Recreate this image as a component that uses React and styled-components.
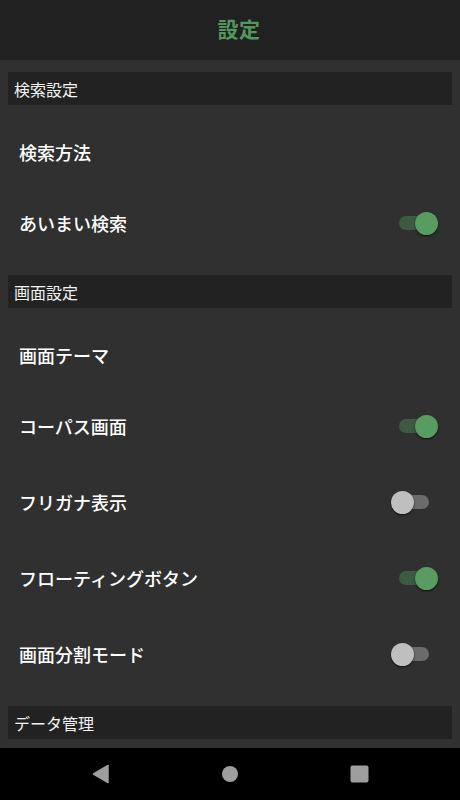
import styled, { createGlobalStyle } from 'styled-components';

const GlobalStyle = createGlobalStyle`
  html, body {
    margin: 0;
    padding: 0;
    background: #303030;
    font-family: 'Noto Sans CJK JP', 'Noto Sans', sans-serif;
  }
`;

const sections = [
  {
    title: '検索設定',
    items: [
      { label: '検索方法' },
      { label: 'あいまい検索', toggle: true, on: true },
    ],
  },
  {
    title: '画面設定',
    items: [
      { label: '画面テーマ' },
      { label: 'コーパス画面', toggle: true, on: true },
      { label: 'フリガナ表示', toggle: true, on: false },
      { label: 'フローティングボタン', toggle: true, on: true },
      { label: '画面分割モード', toggle: true, on: false },
    ],
  },
  {
    title: 'データ管理',
    items: [],
  },
];

const Switch = ({ on }) => (
  <Track $on={on}>
    <Thumb $on={on} />
  </Track>
);

const App = () => {
  return (
    <>
      <GlobalStyle />
      <Screen>
        <AppBar>
          <h1>設定</h1>
        </AppBar>
        <Content>
          {sections.map((section) => (
            <section key={section.title}>
              <SectionHeader>{section.title}</SectionHeader>
              {section.items.length > 0 && (
                <List>
                  {section.items.map((item) => (
                    <Row key={item.label} $toggle={item.toggle}>
                      <span>{item.label}</span>
                      {item.toggle && <Switch on={item.on} />}
                    </Row>
                  ))}
                </List>
              )}
            </section>
          ))}
        </Content>
        <NavBar>
          <svg width='18' height='20' viewBox='0 0 18 20'>
            <path
              d='M16 1.5 L16 18.5 L1.5 10 Z'
              fill='#9e9e9e'
              stroke='#9e9e9e'
              strokeWidth='1.5'
              strokeLinejoin='round'
            />
          </svg>
          <svg width='18' height='18' viewBox='0 0 18 18'>
            <circle cx='9' cy='9' r='8' fill='#9e9e9e' />
          </svg>
          <svg width='19' height='18' viewBox='0 0 19 18'>
            <rect x='0.5' y='0.5' width='18' height='17' rx='2' fill='#9e9e9e' />
          </svg>
        </NavBar>
      </Screen>
    </>
  );
};

const Screen = styled.div`
  display: flex;
  flex-direction: column;
  height: 100vh;
  overflow: hidden;
  background: #303030;
`;

const AppBar = styled.header`
  flex: 0 0 60px;
  display: flex;
  align-items: center;
  justify-content: center;
  padding: 0 0 4px 18px;
  box-sizing: border-box;
  background: #212121;

  h1 {
    margin: 0;
    font-size: 21px;
    font-weight: 700;
    color: #52985e;
    letter-spacing: 0.5px;
  }
`;

const Content = styled.main`
  flex: 1;
  overflow: hidden;
  padding: 12px 8px 0;
  display: flex;
  flex-direction: column;
  gap: 13px;
`;

const SectionHeader = styled.div`
  height: 33px;
  display: flex;
  align-items: center;
  padding: 0 6px;
  background: #222222;
  color: #f2f2f2;
  font-size: 16px;
`;

const List = styled.div`
  padding: 14px 0 1px;
`;

const Row = styled.div`
  height: ${({ $toggle }) => ($toggle ? '76px' : '66px')};
  display: flex;
  align-items: center;
  justify-content: space-between;
  padding: 0 23px 0 11px;

  span {
    color: #ffffff;
    font-size: 18px;
    font-weight: 500;
  }
`;

const Track = styled.div`
  position: relative;
  width: 30px;
  height: 14px;
  border-radius: 7px;
  background: ${({ $on }) => ($on ? '#3e5b42' : '#6b6b6b')};
`;

const Thumb = styled.div`
  position: absolute;
  top: -4.5px;
  left: ${({ $on }) => ($on ? '15.5px' : '-8.5px')};
  width: 23px;
  height: 23px;
  border-radius: 50%;
  background: ${({ $on }) => ($on ? '#589c62' : '#bfbfbf')};
  box-shadow: 0 1px 2px rgba(0, 0, 0, 0.7);
`;

const NavBar = styled.nav`
  flex: 0 0 52px;
  display: flex;
  align-items: center;
  justify-content: center;
  gap: 111px;
  background: #000000;
`;

export default App;
